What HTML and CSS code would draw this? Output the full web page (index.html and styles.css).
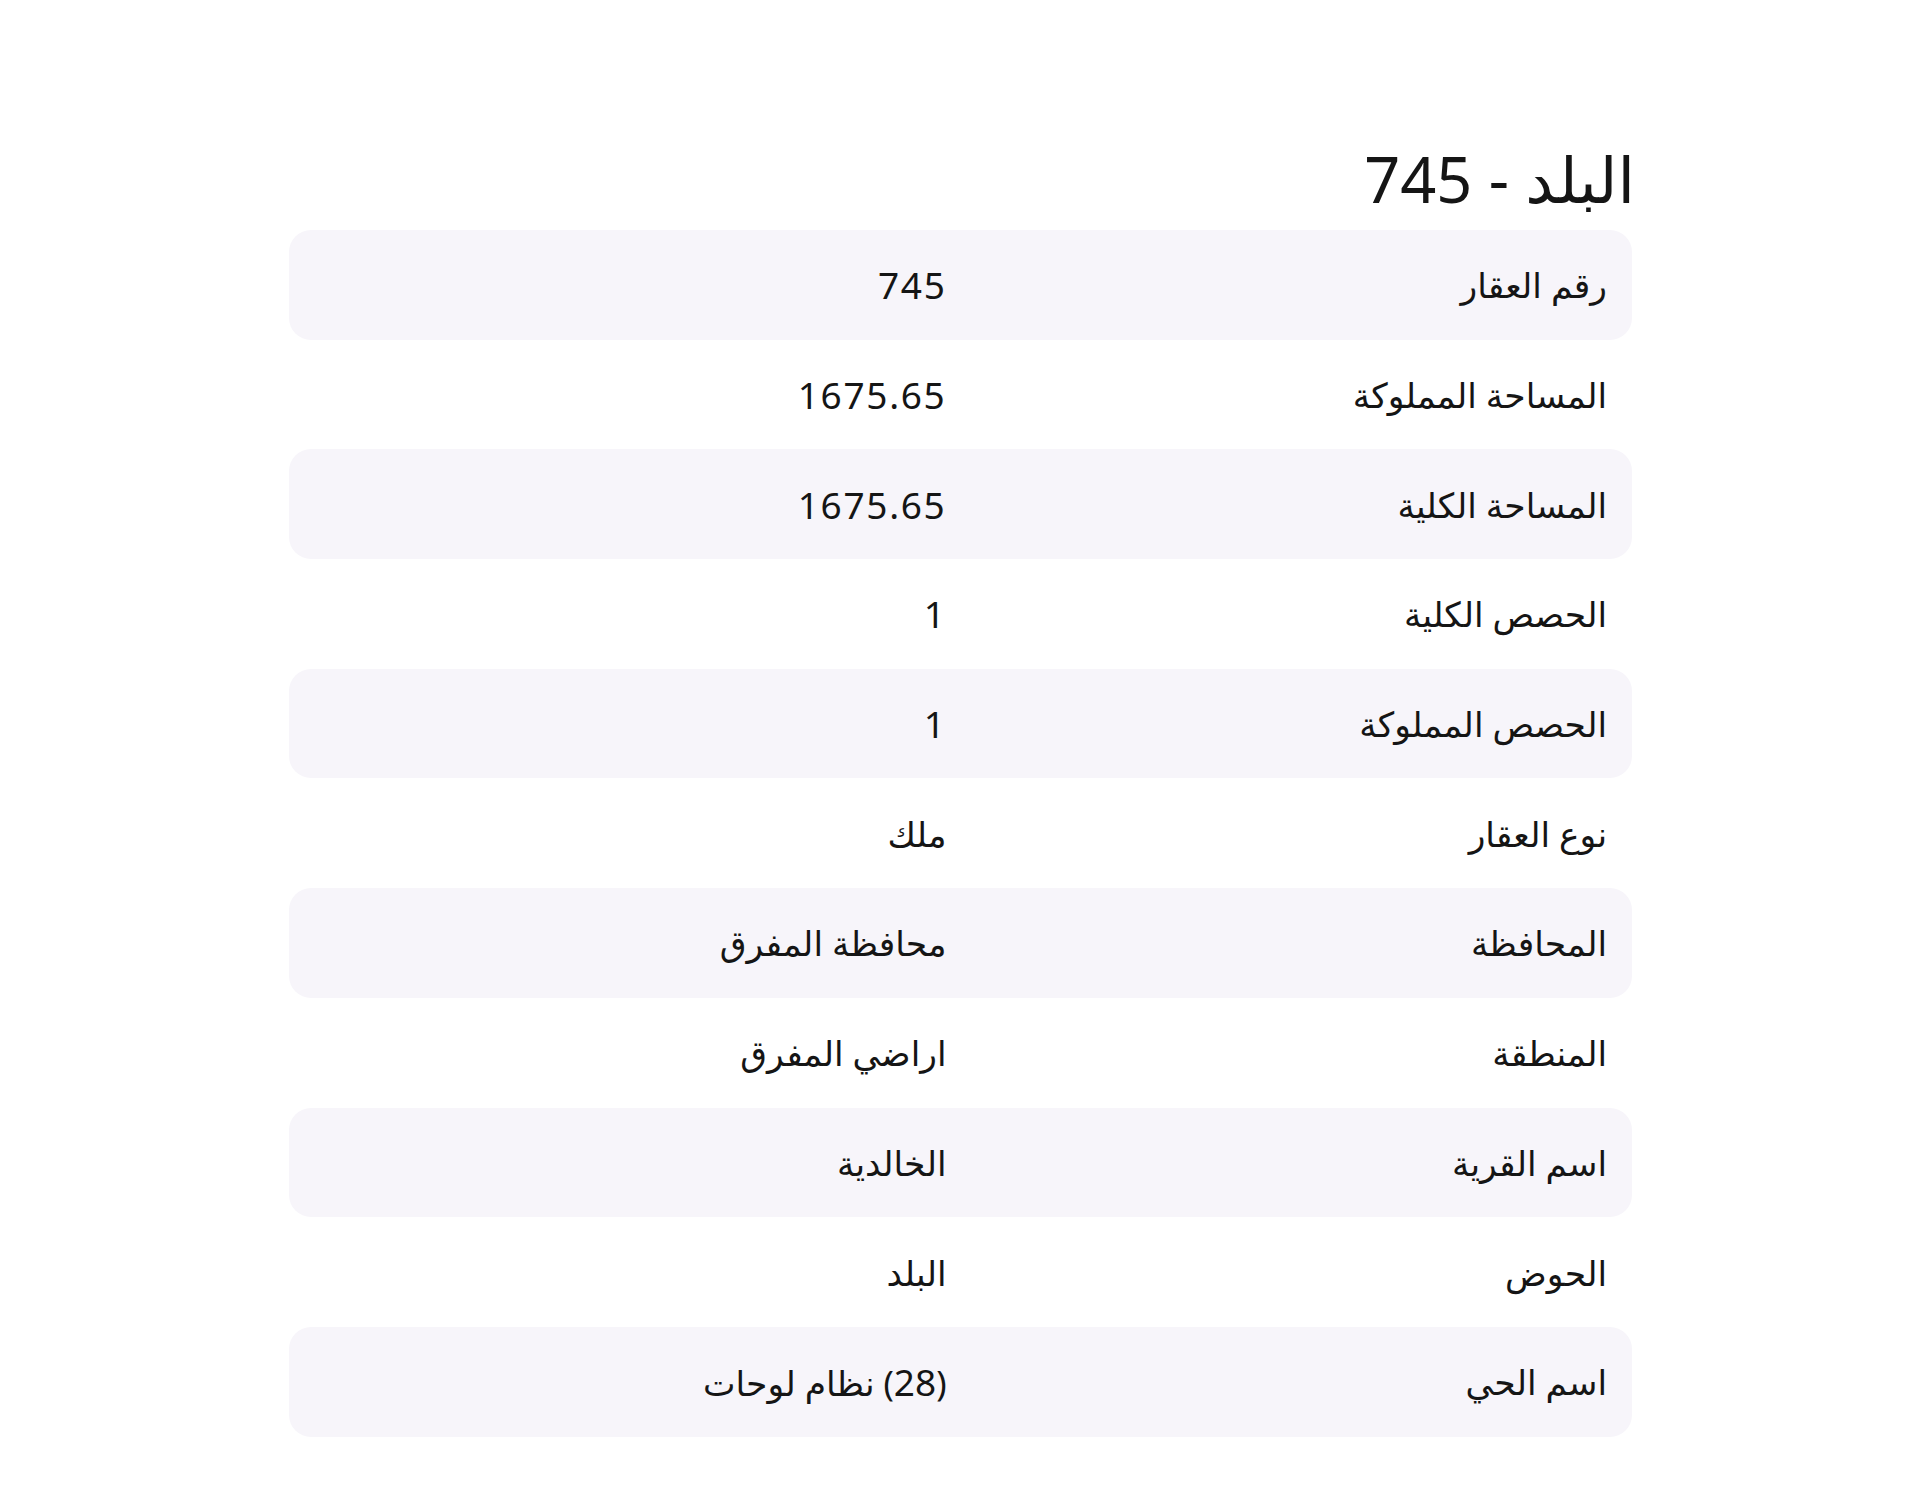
FILE: index.html
```html
<!DOCTYPE html>
<html lang="ar" dir="rtl">
<head>
<meta charset="utf-8">
<title>البلد - 745</title>
<link rel="stylesheet" href="styles.css">
</head>
<body>
<main class="page">
  <h1 class="title">البلد - <span class="title-num">745</span></h1>
  <div class="table">
    <div class="row"><div class="label">رقم العقار</div><div class="value num">745</div></div>
    <div class="row"><div class="label">المساحة المملوكة</div><div class="value num">1675.65</div></div>
    <div class="row"><div class="label">المساحة الكلية</div><div class="value num">1675.65</div></div>
    <div class="row"><div class="label">الحصص الكلية</div><div class="value num">1</div></div>
    <div class="row"><div class="label">الحصص المملوكة</div><div class="value num">1</div></div>
    <div class="row"><div class="label">نوع العقار</div><div class="value">ملك</div></div>
    <div class="row"><div class="label">المحافظة</div><div class="value">محافظة المفرق</div></div>
    <div class="row"><div class="label">المنطقة</div><div class="value">اراضي المفرق</div></div>
    <div class="row"><div class="label">اسم القرية</div><div class="value">الخالدية</div></div>
    <div class="row"><div class="label">الحوض</div><div class="value">البلد</div></div>
    <div class="row"><div class="label">اسم الحي</div><div class="value">(<span class="inline-num">28</span>) نظام لوحات</div></div>
  </div>
</main>
</body>
</html>
```

FILE: styles.css
```css
html, body {
  margin: 0;
  padding: 0;
  background: #ffffff;
}
body {
  font-family: "Noto Sans", "DejaVu Sans", sans-serif;
  color: #151515;
}
.page {
  width: 1343px;
  margin: 0 auto;
  padding-top: 140px;
  padding-left: 1px;
}
.title {
  margin: 0 -3px 12px 0;
  font-weight: 400;
  font-size: 63px;
  line-height: 78px;
}
.title-num {
  letter-spacing: 2px;
}
.table {
  display: flex;
  flex-direction: column;
}
.row {
  display: grid;
  grid-template-columns: 1fr 1fr;
  column-gap: 28px;
  align-items: center;
  height: 109.7px;
  padding: 0 25px;
  border-radius: 22px;
  font-size: 34.5px;
}
.row:nth-child(odd) {
  background: #f7f5fa;
}
.label, .value {
  text-align: right;
}
.num {
  font-size: 37px;
  letter-spacing: 1.7px;
}
.inline-num {
  font-size: 37px;
  letter-spacing: 1.5px;
}
```
